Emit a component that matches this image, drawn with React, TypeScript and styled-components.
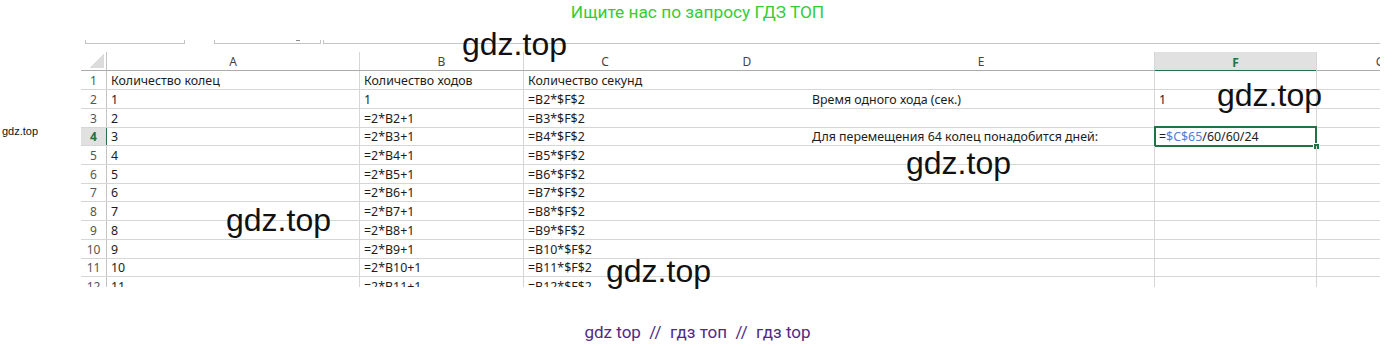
import React from "react";
import styled, { createGlobalStyle } from "styled-components";

const GlobalStyle = createGlobalStyle`
  html, body {
    margin: 0;
    padding: 0;
    background: #fff;
  }
`;

const COLUMNS = "26px 253px 164px 162px 122px 347px 162px 126px";
const GRID = "#d6d6d6";
const GREEN = "#217346";

const Page = styled.div`
  position: relative;
  width: 1395px;
  height: 347px;
  display: flex;
  flex-direction: column;
  overflow: hidden;
  font-family: "Noto Sans", "Liberation Sans", sans-serif;
`;

const Banner = styled.div`
  height: 25px;
  line-height: 25px;
  text-align: center;
  font-family: Roboto, "Liberation Sans", sans-serif;
  font-size: 17.3px;
  color: #35cc35;
`;

const Sheet = styled.div`
  margin-left: 81px;
  width: 1299px;
  overflow: hidden;
`;

// what is left of the name box and formula bar
const FormulaRow = styled.div`
  height: 27px;
  box-sizing: border-box;
  padding-bottom: 8px;
  display: flex;
  align-items: flex-end;
`;

const FieldEdge = styled.div<{ $gap: number; $width?: number; $open?: boolean }>`
  position: relative;
  height: 4px;
  margin-left: ${(p) => p.$gap}px;
  ${(p) => (p.$width ? `width: ${p.$width}px;` : "flex: 1;")}
  box-sizing: border-box;
  border: 1px solid #c4c4c4;
  border-top: none;
  ${(p) => p.$open && "border-right: none;"}
`;

const Caret = styled.span`
  position: absolute;
  right: 20px;
  top: 0;
  width: 4px;
  height: 1px;
  background: #8a8a8a;
`;

const Grid = styled.div`
  height: 235px;
  overflow: hidden;
  font-size: 12.4px;
  color: #1c1c1c;
`;

const Row = styled.div<{ $h: number; $head?: boolean }>`
  display: grid;
  grid-template-columns: ${COLUMNS};
  height: ${(p) => p.$h}px;
  box-sizing: border-box;
  border-bottom: 1px solid ${(p) => (p.$head ? "#ababab" : GRID)};
`;

const Corner = styled.div`
  position: relative;
  border-right: 1px solid #c4c4c4;

  &::after {
    content: "";
    position: absolute;
    right: 2px;
    bottom: 2px;
    width: 15px;
    height: 14px;
    background: linear-gradient(to bottom right, transparent 50%, #dcdcdc 50%);
  }
`;

const ColHead = styled.div<{ $active?: boolean; $edge?: boolean }>`
  display: flex;
  align-items: center;
  justify-content: center;
  padding-top: 1px;
  font-size: 12px;
  color: ${(p) => (p.$active ? GREEN : "#444")};
  font-weight: ${(p) => (p.$active ? 700 : 400)};
  background: ${(p) => (p.$active ? "#e1e1e1" : "transparent")};
  box-shadow: ${(p) => (p.$active ? `inset 0 -1px 0 ${GREEN}` : "none")};
  margin-bottom: ${(p) => (p.$active ? "-1px" : "0")};
  border-right: ${(p) => (p.$edge ? `1px solid ${GRID}` : "none")};
`;

const RowHead = styled.div<{ $active?: boolean }>`
  display: flex;
  align-items: center;
  justify-content: center;
  font-size: 12px;
  color: ${(p) => (p.$active ? GREEN : "#555")};
  font-weight: ${(p) => (p.$active ? 700 : 400)};
  background: ${(p) => (p.$active ? "#e1e1e1" : "transparent")};
  border-right: 1px solid ${(p) => (p.$active ? GREEN : "#c4c4c4")};
`;

const Cell = styled.div<{ $edge?: boolean }>`
  position: relative;
  display: flex;
  align-items: center;
  padding-left: 4px;
  white-space: nowrap;
  border-right: ${(p) => (p.$edge ? `1px solid ${GRID}` : "none")};
`;

const Selection = styled.div`
  position: absolute;
  top: -2px;
  left: -1px;
  right: -1px;
  bottom: -2px;
  border: 2px solid ${GREEN};
  pointer-events: none;

  &::after {
    content: "";
    position: absolute;
    right: -5px;
    bottom: -5px;
    width: 5px;
    height: 5px;
    background: ${GREEN};
    border: 1px solid #fff;
  }
`;

const Ref = styled.span`
  color: #4f7fd8;
`;

const Mark = styled.div<{ $x: number; $y: number; $size: number }>`
  position: absolute;
  left: ${(p) => p.$x}px;
  top: ${(p) => p.$y}px;
  font-family: "Liberation Sans", Arial, sans-serif;
  font-size: ${(p) => p.$size}px;
  line-height: 1;
  color: #111;
  white-space: nowrap;
  pointer-events: none;
`;

const Footer = styled.div`
  padding-top: 35px;
  line-height: 20px;
  text-align: center;
  white-space: pre;
  font-family: Roboto, "Liberation Sans", sans-serif;
  font-size: 17px;
  color: #502a85;
`;

const letters = ["A", "B", "C", "D", "E", "F", "G"];
const edges = [true, true, false, false, true, true, false];
const heights = [19, 19, 19, 18, 19, 19, 18, 19, 19, 19, 18, 19];

const body: React.ReactNode[][] = heights.map((_, i) => {
  const n = i + 1;
  if (n === 1) return ["Количество колец", "Количество ходов", "Количество секунд", "", "", "", ""];
  const a = String(n - 1);
  const b = n === 2 ? "1" : `=2*B${n - 1}+1`;
  const c = `=B${n}*$F$2`;
  let e: React.ReactNode = "";
  let f: React.ReactNode = "";
  if (n === 2) {
    e = "Время одного хода (сек.)";
    f = "1";
  }
  if (n === 4) {
    e = "Для перемещения 64 колец понадобится дней:";
    f = (
      <>
        =<Ref>$C$65</Ref>/60/60/24
        <Selection />
      </>
    );
  }
  return [a, b, c, "", e, f, ""];
});

const marks = [
  { x: 462, y: 28, size: 32 },
  { x: 1217, y: 79, size: 32 },
  { x: 906, y: 147, size: 32 },
  { x: 226, y: 204, size: 32 },
  { x: 606, y: 255, size: 32 },
  { x: 2, y: 126, size: 11 },
];

export default function App() {
  return (
    <Page>
      <GlobalStyle />
      <Banner>Ищите нас по запросу ГДЗ ТОП</Banner>

      <Sheet>
        <FormulaRow>
          <FieldEdge $gap={4} $width={100} />
          <FieldEdge $gap={29} $width={107}>
            <Caret />
          </FieldEdge>
          <FieldEdge $gap={2} $open />
        </FormulaRow>

        <Grid>
          <Row $h={19} $head>
            <Corner />
            {letters.map((l, i) => (
              <ColHead key={l} $active={l === "F"} $edge={edges[i]}>
                {l}
              </ColHead>
            ))}
          </Row>

          {body.map((cells, i) => (
            <Row key={i} $h={heights[i]}>
              <RowHead $active={i === 3}>{i + 1}</RowHead>
              {cells.map((v, j) => (
                <Cell key={j} $edge={edges[j]}>
                  {v}
                </Cell>
              ))}
            </Row>
          ))}
        </Grid>
      </Sheet>

      <Footer>{"gdz top  //  гдз топ  //  гдз top"}</Footer>

      {marks.map((m, i) => (
        <Mark key={i} $x={m.x} $y={m.y} $size={m.size}>
          gdz.top
        </Mark>
      ))}
    </Page>
  );
}
